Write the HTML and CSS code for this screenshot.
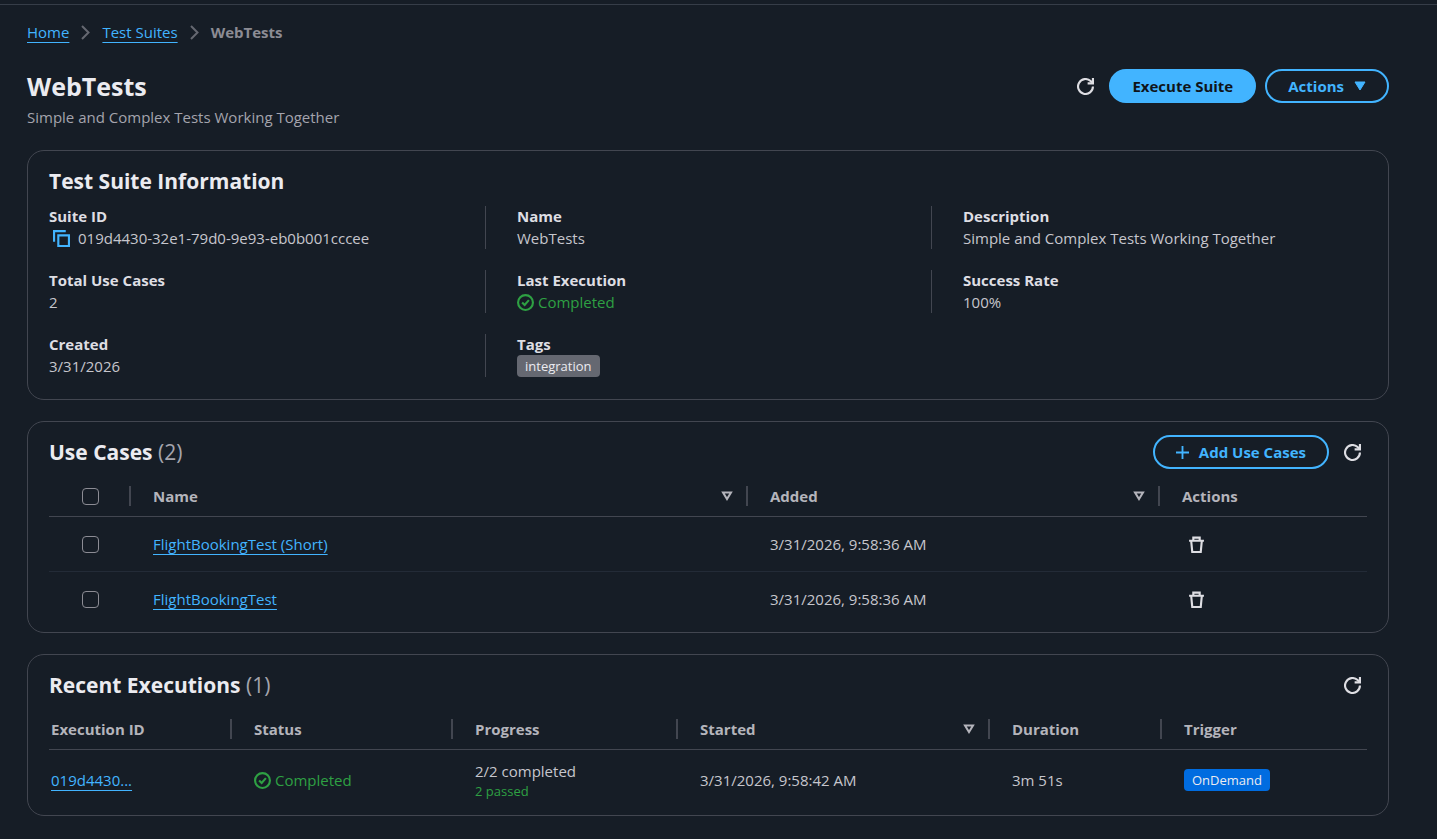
FILE: index.html
```html
<!DOCTYPE html>
<html lang="en">
<head>
    <meta charset="UTF-8">
    <meta name="viewport" content="width=device-width, initial-scale=1.0">
    <title>WebTests</title>
    <link rel="stylesheet" href="styles.css">
</head>
<body>
    <!-- Shared icons -->
    <svg class="icon-defs" width="0" height="0" aria-hidden="true">
        <symbol id="icon-refresh" viewBox="0 0 16 16">
            <path d="M15 8a7 7 0 1 1-2.2-5.1L14.500 4.500" />
            <path d="M10 5h5V0" />
        </symbol>
        <symbol id="icon-check" viewBox="0 0 16 16">
            <circle cx="8" cy="8" r="7" />
            <path d="M4.8 8l2.4 2.4 4-4.6" />
        </symbol>
        <symbol id="icon-trash" viewBox="0 0 16 16">
            <path d="M1 4.500h14M5 4.500V1.500h6v3M3 4.500l1 10.500h8l1-10.500" />
        </symbol>
        <symbol id="icon-sort" viewBox="0 0 12 10">
            <path d="M2 1.5h8L6 8z" />
        </symbol>
        <symbol id="icon-chevron" viewBox="0 0 9 15">
            <path d="M1 1l6.500 6.500L1 14" />
        </symbol>
    </svg>

    <div class="top-bar"></div>

    <main class="page">
        <nav class="breadcrumbs" aria-label="Breadcrumbs">
            <a href="#">Home</a>
            <svg class="chevron"><use href="#icon-chevron" /></svg>
            <a href="#">Test Suites</a>
            <svg class="chevron"><use href="#icon-chevron" /></svg>
            <span class="current">WebTests</span>
        </nav>

        <header class="page-header">
            <div class="title-row">
                <h1>WebTests</h1>
                <div class="actions">
                    <button class="icon-btn" aria-label="Refresh"><svg class="icon"><use href="#icon-refresh" /></svg></button>
                    <button class="btn btn-primary">Execute Suite</button>
                    <button class="btn">Actions
                        <svg class="caret" viewBox="0 0 12 10"><path d="M1 1h10L6 9z" /></svg>
                    </button>
                </div>
            </div>
            <p class="description">Simple and Complex Tests Working Together</p>
        </header>

        <section class="card info-card">
            <div class="card-header">
                <h2>Test Suite Information</h2>
            </div>
            <dl class="info-grid">
                <div class="info-item">
                    <dt>Suite ID</dt>
                    <dd>
                        <button class="copy-btn" aria-label="Copy Suite ID">
                            <svg class="icon" viewBox="0 0 16 16"><path d="M1 11V1h11" /><path d="M5 5h10v10H5z" /></svg>
                        </button>
                        019d4430-32e1-79d0-9e93-eb0b001cccee
                    </dd>
                </div>
                <div class="info-item">
                    <dt>Name</dt>
                    <dd>WebTests</dd>
                </div>
                <div class="info-item">
                    <dt>Description</dt>
                    <dd>Simple and Complex Tests Working Together</dd>
                </div>
                <div class="info-item">
                    <dt>Total Use Cases</dt>
                    <dd>2</dd>
                </div>
                <div class="info-item">
                    <dt>Last Execution</dt>
                    <dd><span class="status"><svg class="icon"><use href="#icon-check" /></svg>Completed</span></dd>
                </div>
                <div class="info-item">
                    <dt>Success Rate</dt>
                    <dd>100%</dd>
                </div>
                <div class="info-item">
                    <dt>Created</dt>
                    <dd>3/31/2026</dd>
                </div>
                <div class="info-item">
                    <dt>Tags</dt>
                    <dd><span class="badge">integration</span></dd>
                </div>
            </dl>
        </section>

        <section class="card">
            <div class="card-header">
                <h2>Use Cases <span class="counter">(2)</span></h2>
                <div class="actions">
                    <button class="btn">
                        <svg class="plus" viewBox="0 0 14 14"><path d="M7 0v14M0 7h14" /></svg>
                        Add Use Cases
                    </button>
                    <button class="icon-btn" aria-label="Refresh use cases"><svg class="icon"><use href="#icon-refresh" /></svg></button>
                </div>
            </div>
            <table class="use-cases">
                <colgroup>
                    <col class="col-select">
                    <col>
                    <col class="col-added">
                    <col class="col-actions">
                </colgroup>
                <thead>
                    <tr>
                        <th class="select"><input type="checkbox" aria-label="Select all"></th>
                        <th><div class="sortable">Name <svg class="sort"><use href="#icon-sort" /></svg></div></th>
                        <th><div class="sortable">Added <svg class="sort"><use href="#icon-sort" /></svg></div></th>
                        <th>Actions</th>
                    </tr>
                </thead>
                <tbody>
                    <tr>
                        <td class="select"><input type="checkbox" aria-label="Select FlightBookingTest (Short)"></td>
                        <td><a href="#">FlightBookingTest (Short)</a></td>
                        <td>3/31/2026, 9:58:36 AM</td>
                        <td><button class="icon-btn trash" aria-label="Remove"><svg class="icon"><use href="#icon-trash" /></svg></button></td>
                    </tr>
                    <tr>
                        <td class="select"><input type="checkbox" aria-label="Select FlightBookingTest"></td>
                        <td><a href="#">FlightBookingTest</a></td>
                        <td>3/31/2026, 9:58:36 AM</td>
                        <td><button class="icon-btn trash" aria-label="Remove"><svg class="icon"><use href="#icon-trash" /></svg></button></td>
                    </tr>
                </tbody>
            </table>
        </section>

        <section class="card">
            <div class="card-header">
                <h2>Recent Executions <span class="counter">(1)</span></h2>
                <div class="actions">
                    <button class="icon-btn" aria-label="Refresh executions"><svg class="icon"><use href="#icon-refresh" /></svg></button>
                </div>
            </div>
            <table class="executions">
                <colgroup>
                    <col class="col-id">
                    <col class="col-status">
                    <col class="col-progress">
                    <col>
                    <col class="col-duration">
                    <col class="col-trigger">
                </colgroup>
                <thead>
                    <tr>
                        <th>Execution ID</th>
                        <th>Status</th>
                        <th>Progress</th>
                        <th><div class="sortable">Started <svg class="sort"><use href="#icon-sort" /></svg></div></th>
                        <th>Duration</th>
                        <th>Trigger</th>
                    </tr>
                </thead>
                <tbody>
                    <tr>
                        <td><a href="#">019d4430...</a></td>
                        <td><span class="status"><svg class="icon"><use href="#icon-check" /></svg>Completed</span></td>
                        <td>
                            <div>2/2 completed</div>
                            <div class="passed">2 passed</div>
                        </td>
                        <td>3/31/2026, 9:58:42 AM</td>
                        <td>3m 51s</td>
                        <td><span class="badge badge-blue">OnDemand</span></td>
                    </tr>
                </tbody>
            </table>
        </section>
    </main>
</body>
</html>
```
FILE: styles.css
```css
* {
    box-sizing: border-box;
}

body {
    font-family: "Open Sans", "Noto Sans", Arial, sans-serif;
    font-size: 15px;
    line-height: 21px;
    color: #c6c6cd;
    background-color: #161d26;
    margin: 0;
}

h1, h2, p, dl, dd {
    margin: 0;
}

a {
    color: #42b4ff;
    text-decoration: underline;
    text-decoration-thickness: 1px;
    text-underline-offset: 4px;
}

svg {
    display: block;
    flex: none;
    fill: none;
    stroke: currentColor;
    stroke-width: 2;
}

.icon-defs {
    position: absolute;
}

.icon {
    width: 17px;
    height: 17px;
}

.top-bar {
    height: 5px;
    border-bottom: 1px solid #363d48;
}

.page {
    padding: 17px 48px 22px 27px;
}

/* Breadcrumbs */
.breadcrumbs {
    display: flex;
    align-items: center;
    gap: 12px;
    margin-bottom: 26px;
}

.chevron {
    width: 9px;
    height: 15px;
    color: #656871;
}

.current {
    font-weight: 700;
    color: #8c8c94;
}

/* Page header */
.page-header {
    margin-bottom: 22px;
}

.title-row {
    display: flex;
    justify-content: space-between;
    align-items: center;
    margin-bottom: 4px;
}

h1 {
    font-size: 25px;
    line-height: 34px;
    font-weight: 700;
    color: #ebebf0;
}

.description {
    color: #a4a4ad;
}

.actions {
    display: flex;
    align-items: center;
    gap: 9px;
}

.btn {
    display: flex;
    align-items: center;
    gap: 10px;
    height: 34px;
    padding: 0 21px;
    font: inherit;
    font-weight: 700;
    color: #42b4ff;
    background: transparent;
    border: 2px solid #42b4ff;
    border-radius: 17px;
    cursor: pointer;
}

.btn:hover {
    background-color: #1b232d;
}

.btn-primary,
.btn-primary:hover {
    color: #0f141a;
    background-color: #42b4ff;
}

.icon-btn {
    padding: 6px;
    color: #dedee3;
    background: none;
    border: none;
    cursor: pointer;
}

.caret {
    width: 12px;
    height: 10px;
    fill: currentColor;
    stroke-linejoin: round;
    stroke-width: 1;
}

.plus {
    width: 13px;
    height: 13px;
}

/* Cards */
.card {
    padding: 13px 21px 5px;
    border: 1px solid #424650;
    border-radius: 17px;
    margin-bottom: 21px;
}

.card-header {
    display: flex;
    justify-content: space-between;
    align-items: center;
    min-height: 34px;
    margin-bottom: 7px;
}

.info-card {
    padding-bottom: 22px;
}

.info-card .card-header {
    margin-bottom: 8px;
}

h2 {
    font-size: 21px;
    line-height: 26px;
    font-weight: 700;
    color: #ebebf0;
}

.counter {
    font-weight: 400;
    color: #a4a4ad;
}

/* Suite information */
.info-grid {
    display: grid;
    grid-template-columns: repeat(3, 1fr);
    row-gap: 21px;
    margin: 0 -10px;
}

.info-item {
    padding-left: 31px;
    border-left: 1px solid #424650;
}

.info-item:nth-child(3n + 1) {
    padding-left: 10px;
    border-left: none;
}

dt {
    font-weight: 700;
    color: #dedee3;
}

dd {
    display: flex;
    align-items: center;
    line-height: 22px;
}

.copy-btn {
    padding: 0 8px 0 4px;
    color: #42b4ff;
    background: none;
    border: none;
    cursor: pointer;
}

.status {
    display: inline-flex;
    align-items: center;
    gap: 4px;
    vertical-align: middle;
    color: #2ea043;
}

.badge {
    display: inline-block;
    padding: 0 8px;
    font-size: 13px;
    line-height: 22px;
    color: #ebebf0;
    background-color: #656871;
    border-radius: 4px;
}

.badge-blue {
    background-color: #006ce0;
}

/* Tables */
table {
    width: 100%;
    table-layout: fixed;
    border-collapse: separate;
    border-spacing: 0;
}

th,
td {
    padding: 0 0 0 22px;
    text-align: left;
}

th {
    height: 41px;
    font-weight: 700;
    color: #b4b4bb;
    border-bottom: 1px solid #424650;
}

/* short divider between header cells */
th:not(:last-child) {
    background: linear-gradient(#424650, #424650) no-repeat right center / 2px 20px;
}

.executions th:first-child,
.executions td:first-child {
    padding-left: 2px;
}

.sortable {
    display: flex;
    justify-content: space-between;
    align-items: center;
    padding-right: 15px;
}

.sort {
    width: 12px;
    height: 10px;
}

.use-cases td {
    height: 55px;
}

.use-cases tr:not(:last-child) td {
    border-bottom: 1px solid #232b37;
}

.executions td {
    height: 60px;
}

th.select,
td.select {
    padding: 0;
    text-align: center;
}

input[type="checkbox"] {
    appearance: none;
    display: block;
    width: 17px;
    height: 17px;
    margin: 0 auto;
    border: 1px solid #8c8c94;
    border-radius: 4px;
}

input[type="checkbox"]:checked {
    background-color: #42b4ff;
}

.trash {
    display: block;
}

.passed {
    font-size: 13px;
    line-height: 18px;
    color: #2ea043;
}

.col-select {
    width: 82px;
}

.col-added {
    width: 412px;
}

.col-actions {
    width: 207px;
}

.col-id {
    width: 183px;
}

.col-status {
    width: 221px;
}

.col-progress {
    width: 225px;
}

.col-duration {
    width: 172px;
}

.col-trigger {
    width: 205px;
}
```
